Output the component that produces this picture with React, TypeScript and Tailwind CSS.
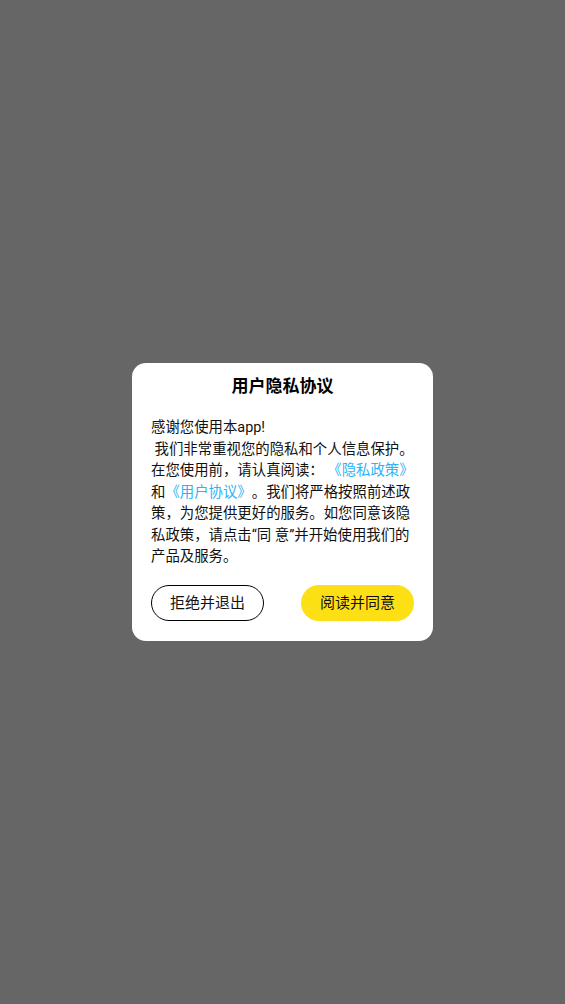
export default function App() {
  const lines: React.ReactNode[] = [
    '感谢您使用本app!',
    '\u00a0我们非常重视您的隐私和个人信息保护。',
    <>
      在您使用前，请认真阅读：<span className="text-[#2db3f7]">{'\u00a0'}《隐私政策》</span>
    </>,
    <>
      和<span className="text-[#2db3f7]">《用户协议》</span>。我们将严格按照前述政
    </>,
    '策，为您提供更好的服务。如您同意该隐',
    '私政策，请点击“同 意”并开始使用我们的',
    '产品及服务。',
  ]

  return (
    <div
      className="flex h-[1004px] w-full items-center justify-center bg-[#666666]"
      style={{ fontFamily: 'Roboto, "Noto Sans CJK SC", sans-serif' }}
    >
      <div className="flex w-[301px] flex-col rounded-[14px] bg-white px-[19px] pb-[20px] pt-[10px]">
        <h1 className="text-center text-[17px] font-bold leading-[26px] text-black">用户隐私协议</h1>
        <div className="mt-[18px] text-[14.4px] leading-[21.6px] text-[#111] [text-spacing-trim:space-all]">
          {lines.map((l, i) => (
            <div key={i} className="whitespace-nowrap">
              {l}
            </div>
          ))}
        </div>
        <div className="mt-[17px] flex justify-between">
          <button
            type="button"
            className="h-[36px] w-[113px] rounded-full border-[1.5px] border-black text-[15px] text-[#111]"
          >
            拒绝并退出
          </button>
          <button
            type="button"
            className="h-[36px] w-[113px] rounded-full bg-[#fddf16] text-[15px] text-[#111]"
          >
            阅读并同意
          </button>
        </div>
      </div>
    </div>
  )
}
